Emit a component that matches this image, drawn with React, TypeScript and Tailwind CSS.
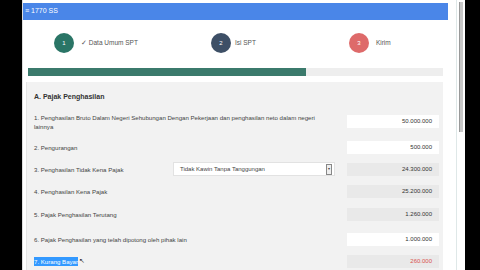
import React from "react";

const font = { fontFamily: '"Liberation Sans", Arial, sans-serif' };

function Val({ v, gray, red }: { v: string; gray?: boolean; red?: boolean }) {
  return (
    <div
      className={`w-[92px] h-[13px] shrink-0 flex items-center justify-end pr-[7px] text-[6px] ${
        gray ? "bg-[#e9e9e9]" : "bg-white"
      } ${red ? "text-[#d9534f]" : "text-[#333]"}`}
    >
      {v}
    </div>
  );
}

export default function App() {
  return (
    <div className="w-[480px] h-[270px] bg-black flex overflow-hidden" style={font}>
      <div className="w-[22px] shrink-0 bg-black" />
      <div className="w-[434px] shrink-0 bg-white flex flex-col pt-[3px] pr-[8px] border-l border-[#ddd] overflow-hidden">
        <div className="h-[17px] shrink-0 bg-[#4a86e8] flex items-center pl-[2px] text-white text-[7px]">
          ≡ 1770 SS
        </div>
        <div className="h-[13px] shrink-0" />
        <div className="h-[20px] shrink-0 flex items-center text-[6.5px] text-[#555]">
          <div className="w-[20px] h-[20px] rounded-full bg-[#2a7566] ml-[31px] flex items-center justify-center text-white text-[6px]">1</div>
          <div className="ml-[7px]">✓ Data Umum SPT</div>
          <div className="w-[20px] h-[20px] rounded-full bg-[#3d4f66] ml-[73px] flex items-center justify-center text-white text-[6px]">2</div>
          <div className="ml-[4px]">Isi SPT</div>
          <div className="w-[20px] h-[20px] rounded-full bg-[#de6a6a] ml-[93px] flex items-center justify-center text-white text-[6px]">3</div>
          <div className="ml-[7px]">Kirim</div>
        </div>
        <div className="h-[15px] shrink-0" />
        <div className="h-[8px] shrink-0 ml-[5px] mr-[5px] bg-[#eeeeee] flex">
          <div className="w-[278px] h-full bg-[#3b7a6c]" />
        </div>
        <div className="h-[6px] shrink-0" />
        <div className="flex-1 shrink-0 ml-[3px] mr-[5px] bg-[#f2f2f2] border-l border-[#e4e4e4] pl-[7px] pr-[4px] pt-[9px] text-[#444]">
          <div className="h-[12px] flex items-center text-[7px] font-bold text-[#333]">A. Pajak Penghasilan</div>
          <div className="h-[12px]" />
          <div className="h-[26px] flex items-start justify-between">
            <div className="w-[292px] text-[6.1px] leading-[9px] -mt-[2px]">
              1. Penghasilan Bruto Dalam Negeri Sehubungan Dengan Pekerjaan dan penghasilan neto dalam negeri lainnya
            </div>
            <Val v="50.000.000" />
          </div>
          <div className="h-[22px] flex items-start justify-between">
            <div className="text-[6.1px] h-[13px] flex items-center">2. Pengurangan</div>
            <Val v="500.000" />
          </div>
          <div className="h-[22px] flex items-start justify-between">
            <div className="text-[6.1px] h-[13px] flex items-center">3. Penghasilan Tidak Kena Pajak</div>
            <div className="flex items-start">
              <div className="w-[162px] h-[14px] -mt-[1px] bg-white border border-[#e2e2e2] flex items-center justify-between pl-[6px] pr-[2px] text-[6px] text-[#444]">
                <span>Tidak Kawin Tanpa Tanggungan</span>
                <span className="w-[6px] h-[11px] border border-[#888] bg-[#eee] flex items-center justify-center text-[4px] leading-none">▾</span>
              </div>
              <div className="w-[12px]" />
              <Val v="24.300.000" gray />
            </div>
          </div>
          <div className="h-[23px] flex items-start justify-between">
            <div className="text-[6.1px] h-[13px] flex items-center">4. Penghasilan Kena Pajak</div>
            <Val v="25.200.000" gray />
          </div>
          <div className="h-[25px] flex items-start justify-between">
            <div className="text-[6.1px] h-[13px] flex items-center">5. Pajak Penghasilan Terutang</div>
            <Val v="1.260.000" gray />
          </div>
          <div className="h-[22px] flex items-start justify-between">
            <div className="text-[6.1px] h-[13px] flex items-center">6. Pajak Penghasilan yang telah dipotong oleh pihak lain</div>
            <Val v="1.000.000" />
          </div>
          <div className="h-[22px] flex items-start justify-between">
            <div className="text-[6.1px] h-[13px] flex items-center">
              <span className="bg-[#3399ff] text-white">7. Kurang Bayar</span>
              <span className="ml-[1px] text-[7px] text-[#333]">↖</span>
            </div>
            <Val v="260.000" gray red />
          </div>
        </div>
      </div>
      <div className="w-[9px] shrink-0 bg-white border-l border-[#dfe8e8] flex justify-center">
        <div className="w-[4px] mt-[2px] h-[130px] bg-[#c8c8c8] border-l border-[#999]" />
      </div>
    </div>
  );
}
